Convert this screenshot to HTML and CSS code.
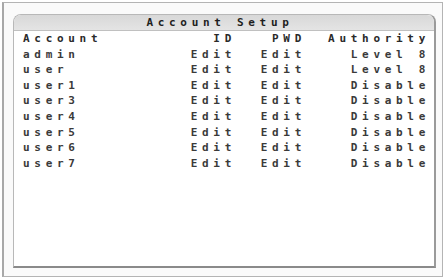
FILE: index.html
```html
<!DOCTYPE html>
<html lang="en">
<head>
  <meta charset="UTF-8">
  <meta name="viewport" content="width=device-width, initial-scale=1.0">
  <title>Account Setup</title>
  <link rel="stylesheet" href="styles.css">
</head>
<body>
  <div class="frame">
    <div class="panel">
      <div class="title">Account Setup</div>
      <div class="table">
        <div class="row head">
          <span>Account</span><span class="r">ID</span><span class="r">PWD</span><span class="r">Authority</span>
        </div>
        <div class="row">
          <span>admin</span><span class="r">Edit</span><span class="r">Edit</span><span class="r">Level 8</span>
        </div>
        <div class="row">
          <span>user</span><span class="r">Edit</span><span class="r">Edit</span><span class="r">Level 8</span>
        </div>
        <div class="row">
          <span>user1</span><span class="r">Edit</span><span class="r">Edit</span><span class="r">Disable</span>
        </div>
        <div class="row">
          <span>user3</span><span class="r">Edit</span><span class="r">Edit</span><span class="r">Disable</span>
        </div>
        <div class="row">
          <span>user4</span><span class="r">Edit</span><span class="r">Edit</span><span class="r">Disable</span>
        </div>
        <div class="row">
          <span>user5</span><span class="r">Edit</span><span class="r">Edit</span><span class="r">Disable</span>
        </div>
        <div class="row">
          <span>user6</span><span class="r">Edit</span><span class="r">Edit</span><span class="r">Disable</span>
        </div>
        <div class="row">
          <span>user7</span><span class="r">Edit</span><span class="r">Edit</span><span class="r">Disable</span>
        </div>
      </div>
    </div>
  </div>
</body>
</html>
```
FILE: styles.css
```css
html, body {
  margin: 0;
  background-color: #ffffff;
}

body {
  width: 445px;
  height: 279px;
  padding: 2px;
  box-sizing: border-box;
}

/* 바깥 테두리 */
.frame {
  width: 441px;
  height: 275px;
  box-sizing: border-box;
  border: 1px solid #b4b4b4;
  border-left: 2px solid #a8a8a8;
  background-color: #fafafa;
  padding: 11px 0 0 9px;
}

/* 안쪽 OSD 패널 */
.panel {
  width: 423px;
  height: 254px;
  box-sizing: border-box;
  background-color: #ffffff;
  border: 1px solid #b8b8b8;
  border-right: 2px solid #9a9a9a;
  border-bottom: 2px solid #8a8a8a;
  border-radius: 8px 8px 0 0;
  font-family: "DejaVu Sans Mono", "Liberation Mono", monospace;
  font-weight: bold;
  font-size: 11px;
  letter-spacing: 4.7px;
  color: #3a3a3a;
}

.title {
  height: 15px;
  line-height: 15px;
  text-align: center;
  color: #1e1e1e;
  background: linear-gradient(#d8d8d8, #e4e4e4);
  border-bottom: 1px solid #c0c0c0;
  border-radius: 7px 7px 0 0;
  padding-right: 8px;
}

.table {
  padding-left: 9px;
}

.row {
  display: grid;
  grid-template-columns: 150px 63px 70px 124px;
  height: 15.6px;
  line-height: 15.6px;
  white-space: pre;
}

.row .r {
  text-align: right;
}

.head {
  color: #2a2a2a;
}
```
